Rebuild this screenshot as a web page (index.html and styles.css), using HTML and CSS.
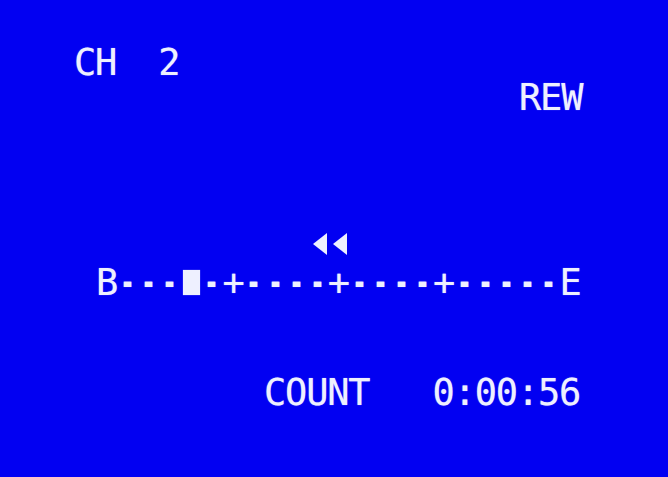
FILE: index.html
```html
<!DOCTYPE html>
<html>
<head>
<meta charset="utf-8">
<link rel="stylesheet" href="styles.css">
</head>
<body>
<div class="screen">
  <div class="row ch">CH&nbsp;&nbsp;2</div>
  <div class="row mode">REW</div>
  <svg class="rew-icon" width="34" height="22" viewBox="0 0 34 22">
    <polygon points="14,0 0,11 14,22" />
    <polygon points="34,0 20,11 34,22" />
  </svg>
  <div class="row bar">
    <span>B</span><span class="d">-</span><span class="d">-</span><span class="d">-</span><span class="pos"></span><span class="d">-</span><span>+</span><span class="d">-</span><span class="d">-</span><span class="d">-</span><span class="d">-</span><span>+</span><span class="d">-</span><span class="d">-</span><span class="d">-</span><span class="d">-</span><span>+</span><span class="d">-</span><span class="d">-</span><span class="d">-</span><span class="d">-</span><span class="d">-</span><span>E</span>
  </div>
  <div class="row count">COUNT&nbsp;&nbsp;&nbsp;0:00:56</div>
</div>
</body>
</html>
```
FILE: styles.css
```css
html, body {
  margin: 0;
  padding: 0;
  background: #0200f2;
}
.screen {
  width: 668px;
  height: 477px;
  box-sizing: border-box;
  padding-top: 44px;
  background: #0200f2;
  color: #eef0ff;
  font-family: "DejaVu Sans Mono", monospace;
  font-size: 37px;
  letter-spacing: -1.2px;
  line-height: 37px;
  overflow: hidden;
  text-shadow: 0 0 1px rgba(255, 255, 255, 0.6);
}
.row {
  white-space: pre;
  height: 37px;
}
.ch {
  padding-left: 74px;
}
.mode {
  margin-top: -2px;
  padding-left: 519px;
}
.rew-icon {
  display: block;
  margin-top: 117px;
  margin-left: 313px;
  fill: #eef0ff;
}
.bar {
  margin-top: 9px;
  padding-left: 96px;
  display: grid;
  grid-template-columns: repeat(23, 21.07px);
  white-space: normal;
}
.bar span {
  display: block;
  height: 37px;
}
.bar .d {
  font-weight: bold;
  transform: scaleX(0.65);
  transform-origin: 9px 50%;
}
.bar .pos {
  width: 17px;
  height: 25px;
  margin-left: 2.4px;
  margin-top: 6px;
  background: #eef0ff;
  box-shadow: 0 0 1px rgba(255, 255, 255, 0.6);
}
.count {
  margin-top: 73px;
  padding-left: 264px;
}
```
